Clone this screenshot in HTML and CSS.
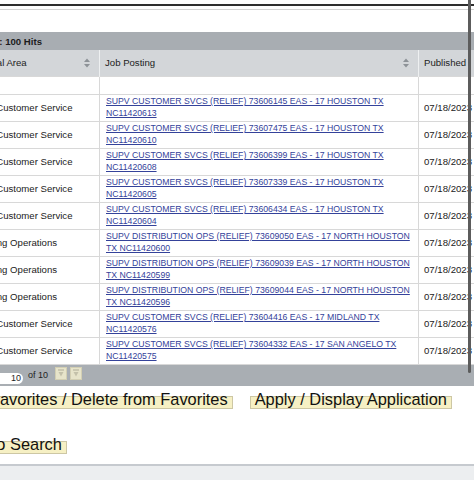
FILE: index.html
```html
<!DOCTYPE html>
<html lang="en">
<head>
    <meta charset="UTF-8">
    <title>Job Search Results</title>
    <link rel="stylesheet" href="styles.css">
</head>
<body>
    <div class="page">
        <div class="masthead"></div>
        <div class="panel">
            <div class="hits">Search Results: 100 Hits</div>
            <table class="results">
                <colgroup>
                    <col class="c-area">
                    <col class="c-post">
                    <col class="c-date">
                </colgroup>
                <thead>
                    <tr>
                        <th><div class="th-in">Functional Area <svg class="sort" viewBox="0 0 6 10"><path d="M0 4 3 0.5 6 4Z M0 6 3 9.5 6 6Z"/></svg></div></th>
                        <th><div class="th-in">Job Posting <svg class="sort" viewBox="0 0 6 10"><path d="M0 4 3 0.5 6 4Z M0 6 3 9.5 6 6Z"/></svg></div></th>
                        <th>Published</th>
                    </tr>
                </thead>
                <tbody>
                    <tr class="blank"><td></td><td></td><td></td></tr>
                    <tr>
                        <td>Retail &amp; Customer Service</td>
                        <td class="post"><a href="#">SUPV CUSTOMER SVCS (RELIEF) 73606145 EAS - 17 HOUSTON TX NC11420613 </a></td>
                        <td>07/18/2023</td>
                    </tr>
                    <tr>
                        <td>Retail &amp; Customer Service</td>
                        <td class="post"><a href="#">SUPV CUSTOMER SVCS (RELIEF) 73607475 EAS - 17 HOUSTON TX NC11420610 </a></td>
                        <td>07/18/2023</td>
                    </tr>
                    <tr>
                        <td>Retail &amp; Customer Service</td>
                        <td class="post"><a href="#">SUPV CUSTOMER SVCS (RELIEF) 73606399 EAS - 17 HOUSTON TX NC11420608 </a></td>
                        <td>07/18/2023</td>
                    </tr>
                    <tr>
                        <td>Retail &amp; Customer Service</td>
                        <td class="post"><a href="#">SUPV CUSTOMER SVCS (RELIEF) 73607339 EAS - 17 HOUSTON TX NC11420605 </a></td>
                        <td>07/18/2023</td>
                    </tr>
                    <tr>
                        <td>Retail &amp; Customer Service</td>
                        <td class="post"><a href="#">SUPV CUSTOMER SVCS (RELIEF) 73606434 EAS - 17 HOUSTON TX NC11420604 </a></td>
                        <td>07/18/2023</td>
                    </tr>
                    <tr>
                        <td>Processing Operations</td>
                        <td class="post"><a href="#">SUPV DISTRIBUTION OPS (RELIEF) 73609050 EAS - 17 NORTH HOUSTON TX NC11420600 </a></td>
                        <td>07/18/2023</td>
                    </tr>
                    <tr>
                        <td>Processing Operations</td>
                        <td class="post"><a href="#">SUPV DISTRIBUTION OPS (RELIEF) 73609039 EAS - 17 NORTH HOUSTON TX NC11420599 </a></td>
                        <td>07/18/2023</td>
                    </tr>
                    <tr>
                        <td>Processing Operations</td>
                        <td class="post"><a href="#">SUPV DISTRIBUTION OPS (RELIEF) 73609044 EAS - 17 NORTH HOUSTON TX NC11420596 </a></td>
                        <td>07/18/2023</td>
                    </tr>
                    <tr>
                        <td>Retail &amp; Customer Service</td>
                        <td class="post"><a href="#">SUPV CUSTOMER SVCS (RELIEF) 73604416 EAS - 17 MIDLAND TX NC11420576 </a></td>
                        <td>07/18/2023</td>
                    </tr>
                    <tr>
                        <td>Retail &amp; Customer Service</td>
                        <td class="post"><a href="#">SUPV CUSTOMER SVCS (RELIEF) 73604332 EAS - 17 SAN ANGELO TX NC11420575 </a></td>
                        <td>07/18/2023</td>
                    </tr>
                </tbody>
            </table>
            <div class="pager">
                <span class="pg-input">10</span>
                <span class="pg-of">of 10</span>
                <span class="pg-btn"><svg viewBox="0 0 10 11"><path d="M2 2h6" stroke="#b9b6a0" stroke-width="1.2"/><path d="M2.5 4h5L5 8.5Z" fill="#c4c1aa"/></svg></span>
                <span class="pg-btn"><svg viewBox="0 0 10 11"><path d="M2 2h6" stroke="#b9b6a0" stroke-width="1.2"/><path d="M2.5 4h5L5 8.5Z" fill="#c4c1aa"/></svg></span>
            </div>
            <div class="actions">
                <span class="btn">Add to Favorites / Delete from Favorites</span>
                <span class="btn">Apply / Display Application</span>
            </div>
            <div class="actions second">
                <span class="btn">Return to Search</span>
            </div>
        </div>
        <div class="pagefoot"></div>
    </div>
    <!-- overlay scrollbar thumb -->
    <div class="thumb"></div>
</body>
</html>
```
FILE: styles.css
```css
* {
    box-sizing: border-box;
}
html, body {
    margin: 0;
    padding: 0;
    background: #fff;
}
body {
    width: 474px;
    height: 480px;
    overflow: hidden;
    position: relative;
    font-family: "Liberation Sans", Arial, sans-serif;
    color: #1f1f1f;
}
.page {
    margin-left: -74px;
    width: 700px;
}
.masthead {
    margin-top: 4px;
    height: 5px;
    border-top: 2px solid #2e2e2e;
    background: #fff;
}
.panel {
    background: #fff;
    border-top: 1px solid #d4d4d4;
    border-bottom: 2px solid #c6cacf;
    padding-top: 22px;
    padding-bottom: 10px;
}
.pagefoot {
    height: 30px;
    background: #eceef0;
}
.hits {
    height: 18px;
    line-height: 19px;
    background: #a8adb2;
    font-size: 9.6px;
    font-weight: bold;
    padding-left: 4px;
    color: #1c1c1c;
}
.results {
    margin-left: 28px;
    border-collapse: collapse;
    table-layout: fixed;
    width: 564px;
}
.c-area { width: 145px; }
.c-post { width: 319px; }
.c-date { width: 100px; }
.results th {
    height: 26px;
    background: #d3d6d9;
    font-weight: normal;
    font-size: 9.6px;
    text-align: left;
    padding: 0 5px;
    border-left: 1px solid #eef0f1;
    color: #222;
}
.th-in {
    display: flex;
    align-items: center;
    justify-content: space-between;
    padding-right: 4px;
}
.sort {
    width: 6px;
    height: 10px;
    fill: #8d9297;
}
.results td {
    height: 27px;
    padding: 0 5px;
    font-size: 9.6px;
    border: 1px solid #d8d8d8;
    white-space: nowrap;
    overflow: hidden;
    color: #222;
}
.results .blank td {
    height: 18px;
}
.results td.post {
    padding: 0 6px 1px;
    white-space: normal;
    font-size: 8.7px;
    line-height: 12px;
}
.post a {
    color: #34429a;
    text-decoration: underline;
}
.pager {
    height: 21px;
    background: #a9aeb3;
    display: flex;
    align-items: flex-start;
    padding-left: 57px;
}
.pg-input {
    margin-top: 8px;
    width: 40px;
    height: 11px;
    line-height: 11px;
    background: #fff;
    border-radius: 6px;
    font-size: 9px;
    text-align: right;
    padding-right: 2px;
}
.pg-of {
    margin-left: 5px;
    margin-top: 5px;
    font-size: 9px;
    line-height: 11px;
}
.pg-btn {
    margin-top: 2px;
    margin-left: 3px;
    width: 12px;
    height: 13px;
    background: #e7e4ca;
    border: 1px solid #d3cfb3;
    display: flex;
    align-items: center;
    justify-content: center;
}
.pg-of + .pg-btn {
    margin-left: 7px;
}
.pg-btn svg {
    width: 10px;
    height: 11px;
}
.actions {
    display: flex;
    gap: 17px;
    padding-left: 7px;
    margin-top: 10px;
}
.actions.second {
    margin-top: 32px;
}
.btn {
    display: inline-block;
    height: 13px;
    line-height: 4px;
    padding: 0 4px 7px;
    font-size: 16.4px;
    background: #f6f0c4;
    border: 1px solid #cdc7a4;
    color: #111;
    white-space: nowrap;
}
.thumb {
    position: absolute;
    left: 468px;
    top: 0;
    width: 3px;
    height: 373px;
    background: #5c5c5c;
    border-radius: 0 0 2px 2px;
}
```
